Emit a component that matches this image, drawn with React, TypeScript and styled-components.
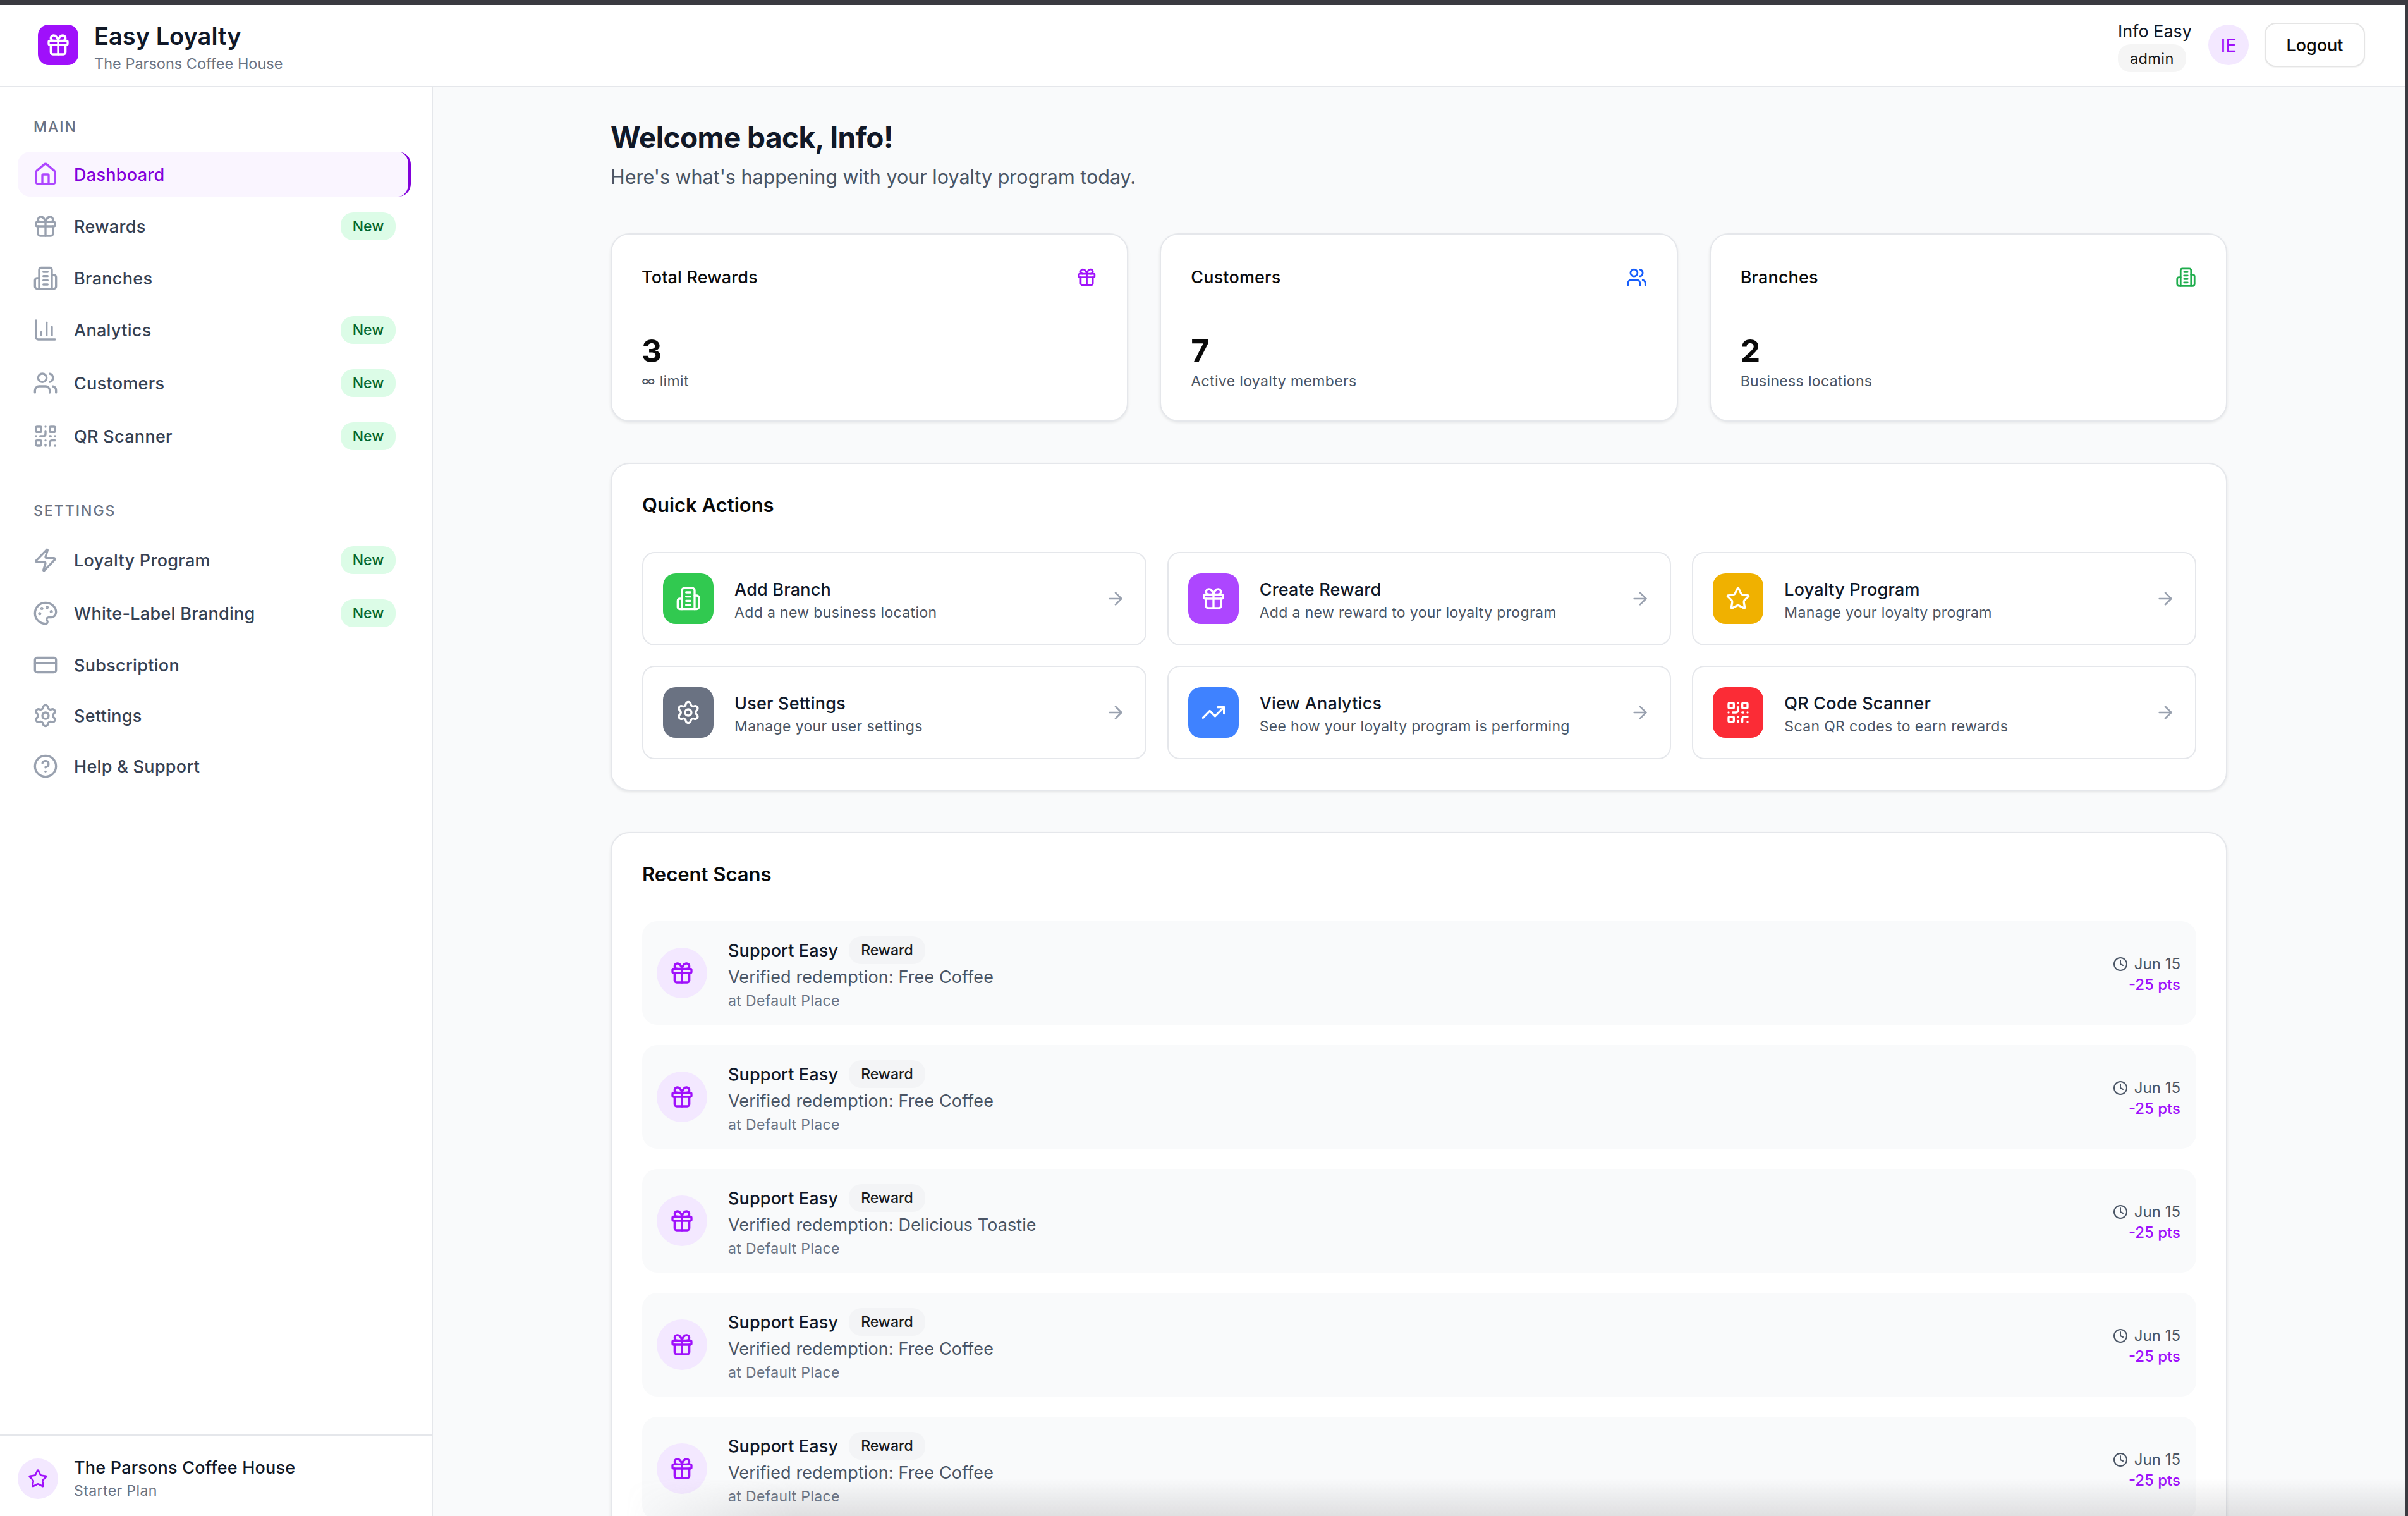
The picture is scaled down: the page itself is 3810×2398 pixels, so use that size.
import React from "react";
import styled, { createGlobalStyle } from "styled-components";
import {
  ArrowRight,
  ChartColumn,
  CircleHelp,
  Clock,
  CreditCard,
  Gift,
  House,
  Palette,
  QrCode,
  Settings,
  Star,
  TrendingUp,
  Users,
  Zap,
} from "lucide-react";

const GlobalStyle = createGlobalStyle`
  * {
    box-sizing: border-box;
  }
  html,
  body {
    margin: 0;
    padding: 0;
    background: #ffffff;
    font-family: Inter, "Noto Sans", sans-serif;
  }
`;

const Shell = styled.div`
  position: relative;
  display: flex;
  flex-direction: column;
  height: 100vh;
  overflow: hidden;
  border-top: 8px solid #3a3a40;
  border-right: 4px solid #3a3a40;
  background: #f9fafb;
`;

const BottomFade = styled.div`
  position: absolute;
  left: 0;
  right: 0;
  bottom: 0;
  height: 60px;
  pointer-events: none;
  background: linear-gradient(to bottom, rgba(120, 120, 125, 0), rgba(120, 120, 125, 0.2));
  mask-image: linear-gradient(to right, transparent 26%, black 33%);
`;

const Header = styled.header`
  display: flex;
  align-items: center;
  justify-content: space-between;
  flex: none;
  height: 130px;
  padding: 0 64px 2px 60px;
  background: #ffffff;
  border-bottom: 2px solid #e5e7eb;
`;

const Brand = styled.div`
  display: flex;
  align-items: center;
  gap: 25px;
`;

const LogoMark = styled.div`
  display: flex;
  align-items: center;
  justify-content: center;
  width: 64px;
  height: 64px;
  border-radius: 17px;
  background: #9f10fb;
  color: #ffffff;
`;

const BrandText = styled.div`
  display: flex;
  flex-direction: column;
  gap: 7px;
  padding-top: 9px;
`;

const BrandName = styled.div`
  font-size: 38px;
  line-height: 44px;
  font-weight: 600;
  color: #101828;
`;

const BrandSub = styled.div`
  font-size: 23.5px;
  line-height: 30px;
  color: #6a7282;
`;

const UserArea = styled.div`
  display: flex;
  align-items: center;
`;

const UserInfo = styled.div`
  display: flex;
  flex-direction: column;
  align-items: flex-start;
  gap: 2px;
  padding-top: 4px;
  margin-right: 26px;
`;

const UserName = styled.div`
  font-size: 27px;
  line-height: 36px;
  color: #101828;
`;

const RoleBadge = styled.div`
  display: flex;
  align-items: center;
  height: 44px;
  padding: 0 19px;
  border-radius: 20px;
  background: #f5f5f5;
  font-size: 23.5px;
  letter-spacing: 0.4px;
  color: #171717;
`;

const UserAvatar = styled.div`
  display: flex;
  align-items: center;
  justify-content: center;
  width: 64px;
  height: 64px;
  margin-right: 25px;
  border-radius: 50%;
  background: #f3e8ff;
  color: #9f10fb;
  font-size: 29px;
`;

const LogoutButton = styled.button`
  width: 159px;
  height: 70px;
  border: 2px solid #e5e5e5;
  border-radius: 18px;
  background: #ffffff;
  box-shadow: 0 1px 2px rgba(0, 0, 0, 0.06);
  font-family: inherit;
  font-size: 27px;
  font-weight: 500;
  color: #0a0a0a;
`;

const Body = styled.div`
  display: flex;
  flex: 1;
  min-height: 0;
`;

const Sidebar = styled.aside`
  display: flex;
  flex-direction: column;
  flex: none;
  width: 685px;
  padding-top: 49px;
  background: #ffffff;
  border-right: 2px solid #e5e7eb;
`;

const SectionLabel = styled.div<{ $spaced?: boolean }>`
  height: 28px;
  margin: ${(p) => (p.$spaced ? "67px" : "0")} 0 ${(p) => (p.$spaced ? "26px" : "25px")} 53px;
  font-size: 23px;
  line-height: 28px;
  font-weight: 500;
  letter-spacing: 2px;
  color: #6a7282;
`;

const NavList = styled.nav`
  display: flex;
  flex-direction: column;
  gap: 9px;
  padding: 0 33px 0 28px;
`;

const NavRow = styled.div<{ $active?: boolean }>`
  display: flex;
  align-items: center;
  gap: 25px;
  padding: 15.5px ${(p) => (p.$active ? "20px" : "24px")} 15.5px 24px;
  border-radius: 20px;
  background: ${(p) => (p.$active ? "#faf5ff" : "transparent")};
  border-right: ${(p) => (p.$active ? "4px solid #8200db" : "0")};
  color: ${(p) => (p.$active ? "#ad46ff" : "#99a1af")};

  svg {
    flex: none;
  }
`;

const NavText = styled.span<{ $active?: boolean }>`
  flex: 1;
  margin: 1px 0 -1px;
  font-size: 27px;
  line-height: 40px;
  font-weight: ${(p) => (p.$active ? 500 : 450)};
  letter-spacing: 0.3px;
  color: ${(p) => (p.$active ? "#8200db" : "#364153")};
`;

const NewBadge = styled.span`
  display: flex;
  align-items: center;
  justify-content: center;
  width: 87px;
  height: 44px;
  border-radius: 20px;
  background: #dcfce7;
  font-size: 23px;
  font-weight: 500;
  color: #016630;
`;

const SidebarFooter = styled.div`
  display: flex;
  align-items: center;
  gap: 25px;
  flex: none;
  margin-top: auto;
  height: 129px;
  padding: 8px 28px 0;
  border-top: 2px solid #e5e7eb;
`;

const FooterAvatar = styled.div`
  display: flex;
  align-items: center;
  justify-content: center;
  width: 64px;
  height: 64px;
  border-radius: 50%;
  background: #f3e8ff;
  color: #9f10fb;
`;

const FooterName = styled.div`
  font-size: 27px;
  line-height: 38px;
  font-weight: 450;
  letter-spacing: 0.2px;
  color: #101828;
`;

const FooterPlan = styled.div`
  font-size: 23px;
  line-height: 34px;
  letter-spacing: 0.4px;
  color: #6a7282;
`;

const Main = styled.main`
  flex: 1;
  min-width: 0;
  overflow: hidden;
  padding: 49px 282px 0 281px;
`;

const Title = styled.h1`
  margin: 0;
  font-size: 46px;
  line-height: 60px;
  font-weight: 700;
  letter-spacing: -0.6px;
  color: #101828;
`;

const Subtitle = styled.p`
  margin: 11px 0 0;
  font-size: 30.5px;
  line-height: 44px;
  color: #4a5565;
`;

const StatGrid = styled.div`
  display: grid;
  grid-template-columns: repeat(3, 1fr);
  gap: 50px;
  margin-top: 67px;
`;

const Card = styled.section`
  border: 2px solid #e5e7eb;
  border-radius: 30px;
  background: #ffffff;
  box-shadow: 0 2px 4px rgba(0, 0, 0, 0.08);
`;

const StatCard = styled(Card)`
  height: 298px;
  padding: 47px 47px 0;
`;

const StatTop = styled.div<{ $color: string }>`
  display: flex;
  align-items: center;
  justify-content: space-between;
  height: 40px;
  color: ${(p) => p.$color};
`;

const StatTitle = styled.div`
  font-size: 27px;
  font-weight: 450;
  letter-spacing: 0.15px;
  color: #0a0a0a;
`;

const StatValue = styled.div`
  margin-top: 67px;
  font-size: 50px;
  line-height: 60px;
  font-weight: 700;
  color: #0a0a0a;
`;

const StatNote = styled.div`
  margin-top: 1px;
  font-size: 23px;
  line-height: 34px;
  letter-spacing: 0.35px;
  color: #4a5565;
`;

const Panel = styled(Card)`
  margin-top: 65px;
  padding: 43px 47px 48px 48px;
`;

const PanelTitle = styled.h2`
  margin: 0;
  font-size: 31px;
  line-height: 44px;
  font-weight: 600;
  color: #0a0a0a;
`;

const ActionGrid = styled.div`
  display: grid;
  grid-template-columns: repeat(3, 1fr);
  gap: 32px 33px;
  margin-top: 52px;
`;

const ActionItem = styled.div`
  display: flex;
  align-items: center;
  height: 148px;
  padding: 0 31px 0 31px;
  border: 2px solid #e5e7eb;
  border-radius: 20px;
  background: #ffffff;
  color: #99a1af;
`;

const ActionIcon = styled.div<{ $bg: string }>`
  display: flex;
  align-items: center;
  justify-content: center;
  flex: none;
  width: 80px;
  height: 80px;
  margin-right: 33px;
  border-radius: 20px;
  background: ${(p) => p.$bg};
  color: #ffffff;
`;

const ActionText = styled.div`
  flex: 1;
  min-width: 0;
  padding-top: 3px;
`;

const ActionTitle = styled.div`
  font-size: 27px;
  line-height: 40px;
  font-weight: 450;
  letter-spacing: 0.2px;
  color: #101828;
`;

const ActionSub = styled.div`
  font-size: 23px;
  line-height: 32px;
  letter-spacing: 0.35px;
  color: #4a5565;
`;

const ScanList = styled.div`
  display: flex;
  flex-direction: column;
  gap: 32px;
  margin-top: 52px;
`;

const ScanRow = styled.div`
  display: flex;
  align-items: center;
  flex: none;
  height: 164px;
  padding: 0 25px 0 23px;
  border-radius: 24px;
  background: #f9fafb;
`;

const ScanAvatar = styled.div`
  display: flex;
  align-items: center;
  justify-content: center;
  flex: none;
  width: 80px;
  height: 80px;
  margin-right: 33px;
  border-radius: 50%;
  background: #f3e8ff;
  color: #9f10fb;
`;

const ScanText = styled.div`
  flex: 1;
  display: flex;
  flex-direction: column;
  gap: 3px;
  padding-top: 2px;
`;

const ScanNameRow = styled.div`
  display: flex;
  align-items: center;
  gap: 17px;
  height: 44px;
`;

const ScanName = styled.div`
  font-size: 27px;
  font-weight: 450;
  letter-spacing: 0.15px;
  color: #101828;
`;

const TypeBadge = styled.div`
  display: flex;
  align-items: center;
  height: 44px;
  padding: 0 19px;
  border-radius: 20px;
  background: #f3f4f6;
  font-size: 23px;
  font-weight: 450;
  color: #171717;
`;

const ScanDesc = styled.div`
  font-size: 27px;
  line-height: 36px;
  letter-spacing: 0.1px;
  color: #4a5565;
`;

const ScanPlace = styled.div`
  font-size: 23px;
  line-height: 32px;
  letter-spacing: 0.35px;
  color: #6a7282;
`;

const ScanMeta = styled.div`
  display: flex;
  flex-direction: column;
  align-items: flex-end;
  gap: 3px;
  padding-top: 5px;
`;

const ScanDate = styled.div`
  display: flex;
  align-items: center;
  gap: 10px;
  font-size: 24px;
  line-height: 30px;
  color: #4a5565;
`;

const ScanPoints = styled.div`
  font-size: 24px;
  line-height: 30px;
  font-weight: 500;
  color: #9f10fb;
`;

// older lucide building-2 shape, the current package draws it with a door
const BuildingIcon = ({ size }: { size: number }) => (
  <svg
    width={size}
    height={size}
    viewBox="0 0 24 24"
    fill="none"
    stroke="currentColor"
    strokeWidth={2}
    strokeLinecap="round"
    strokeLinejoin="round"
  >
    <path d="M6 22V4a2 2 0 0 1 2-2h8a2 2 0 0 1 2 2v18Z" />
    <path d="M6 12H4a2 2 0 0 0-2 2v6a2 2 0 0 0 2 2h2" />
    <path d="M18 9h2a2 2 0 0 1 2 2v9a2 2 0 0 1-2 2h-2" />
    <path d="M10 6h4" />
    <path d="M10 10h4" />
    <path d="M10 14h4" />
    <path d="M10 18h4" />
  </svg>
);

const mainNav = [
  { label: "Dashboard", icon: House, active: true },
  { label: "Rewards", icon: Gift, isNew: true },
  { label: "Branches", icon: BuildingIcon },
  { label: "Analytics", icon: ChartColumn, isNew: true },
  { label: "Customers", icon: Users, isNew: true },
  { label: "QR Scanner", icon: QrCode, isNew: true },
];

const settingsNav = [
  { label: "Loyalty Program", icon: Zap, isNew: true },
  { label: "White-Label Branding", icon: Palette, isNew: true },
  { label: "Subscription", icon: CreditCard },
  { label: "Settings", icon: Settings },
  { label: "Help & Support", icon: CircleHelp },
];

const stats = [
  { title: "Total Rewards", icon: Gift, color: "#9f10fb", value: "3", note: "∞ limit" },
  { title: "Customers", icon: Users, color: "#155dfc", value: "7", note: "Active loyalty members" },
  { title: "Branches", icon: BuildingIcon, color: "#1fad4d", value: "2", note: "Business locations" },
];

const actions = [
  { title: "Add Branch", sub: "Add a new business location", icon: BuildingIcon, bg: "#31c950" },
  { title: "Create Reward", sub: "Add a new reward to your loyalty program", icon: Gift, bg: "#ad46ff" },
  { title: "Loyalty Program", sub: "Manage your loyalty program", icon: Star, bg: "#f0b100" },
  { title: "User Settings", sub: "Manage your user settings", icon: Settings, bg: "#6a7282" },
  { title: "View Analytics", sub: "See how your loyalty program is performing", icon: TrendingUp, bg: "#3f82ff" },
  { title: "QR Code Scanner", sub: "Scan QR codes to earn rewards", icon: QrCode, bg: "#fb2c36" },
];

const scans = ["Free Coffee", "Free Coffee", "Delicious Toastie", "Free Coffee", "Free Coffee"];

type NavEntry = { label: string; icon: React.ElementType; active?: boolean; isNew?: boolean };

const NavItems = ({ items }: { items: NavEntry[] }) => (
  <NavList>
    {items.map((item) => (
      <NavRow key={item.label} $active={item.active}>
        <item.icon size={40} />
        <NavText $active={item.active}>{item.label}</NavText>
        {item.isNew && <NewBadge>New</NewBadge>}
      </NavRow>
    ))}
  </NavList>
);

export default function App() {
  return (
    <>
      <GlobalStyle />
      <Shell>
        <Header>
          <Brand>
            <LogoMark>
              <Gift size={40} />
            </LogoMark>
            <BrandText>
              <BrandName>Easy Loyalty</BrandName>
              <BrandSub>The Parsons Coffee House</BrandSub>
            </BrandText>
          </Brand>
          <UserArea>
            <UserInfo>
              <UserName>Info Easy</UserName>
              <RoleBadge>admin</RoleBadge>
            </UserInfo>
            <UserAvatar>IE</UserAvatar>
            <LogoutButton>Logout</LogoutButton>
          </UserArea>
        </Header>
        <Body>
          <Sidebar>
            <SectionLabel>MAIN</SectionLabel>
            <NavItems items={mainNav} />
            <SectionLabel $spaced>SETTINGS</SectionLabel>
            <NavItems items={settingsNav} />
            <SidebarFooter>
              <FooterAvatar>
                <Star size={32} />
              </FooterAvatar>
              <div>
                <FooterName>The Parsons Coffee House</FooterName>
                <FooterPlan>Starter Plan</FooterPlan>
              </div>
            </SidebarFooter>
          </Sidebar>
          <Main>
            <Title>Welcome back, Info!</Title>
            <Subtitle>Here's what's happening with your loyalty program today.</Subtitle>
            <StatGrid>
              {stats.map((s) => (
                <StatCard key={s.title}>
                  <StatTop $color={s.color}>
                    <StatTitle>{s.title}</StatTitle>
                    <s.icon size={33} />
                  </StatTop>
                  <StatValue>{s.value}</StatValue>
                  <StatNote>{s.note}</StatNote>
                </StatCard>
              ))}
            </StatGrid>
            <Panel>
              <PanelTitle>Quick Actions</PanelTitle>
              <ActionGrid>
                {actions.map((a) => (
                  <ActionItem key={a.title}>
                    <ActionIcon $bg={a.bg}>
                      <a.icon size={40} />
                    </ActionIcon>
                    <ActionText>
                      <ActionTitle>{a.title}</ActionTitle>
                      <ActionSub>{a.sub}</ActionSub>
                    </ActionText>
                    <ArrowRight size={32} />
                  </ActionItem>
                ))}
              </ActionGrid>
            </Panel>
            <Panel>
              <PanelTitle>Recent Scans</PanelTitle>
              <ScanList>
                {scans.map((reward, i) => (
                  <ScanRow key={i}>
                    <ScanAvatar>
                      <Gift size={40} />
                    </ScanAvatar>
                    <ScanText>
                      <ScanNameRow>
                        <ScanName>Support Easy</ScanName>
                        <TypeBadge>Reward</TypeBadge>
                      </ScanNameRow>
                      <ScanDesc>Verified redemption: {reward}</ScanDesc>
                      <ScanPlace>at Default Place</ScanPlace>
                    </ScanText>
                    <ScanMeta>
                      <ScanDate>
                        <Clock size={24} />
                        Jun 15
                      </ScanDate>
                      <ScanPoints>-25 pts</ScanPoints>
                    </ScanMeta>
                  </ScanRow>
                ))}
              </ScanList>
            </Panel>
          </Main>
        </Body>
        <BottomFade />
      </Shell>
    </>
  );
}
